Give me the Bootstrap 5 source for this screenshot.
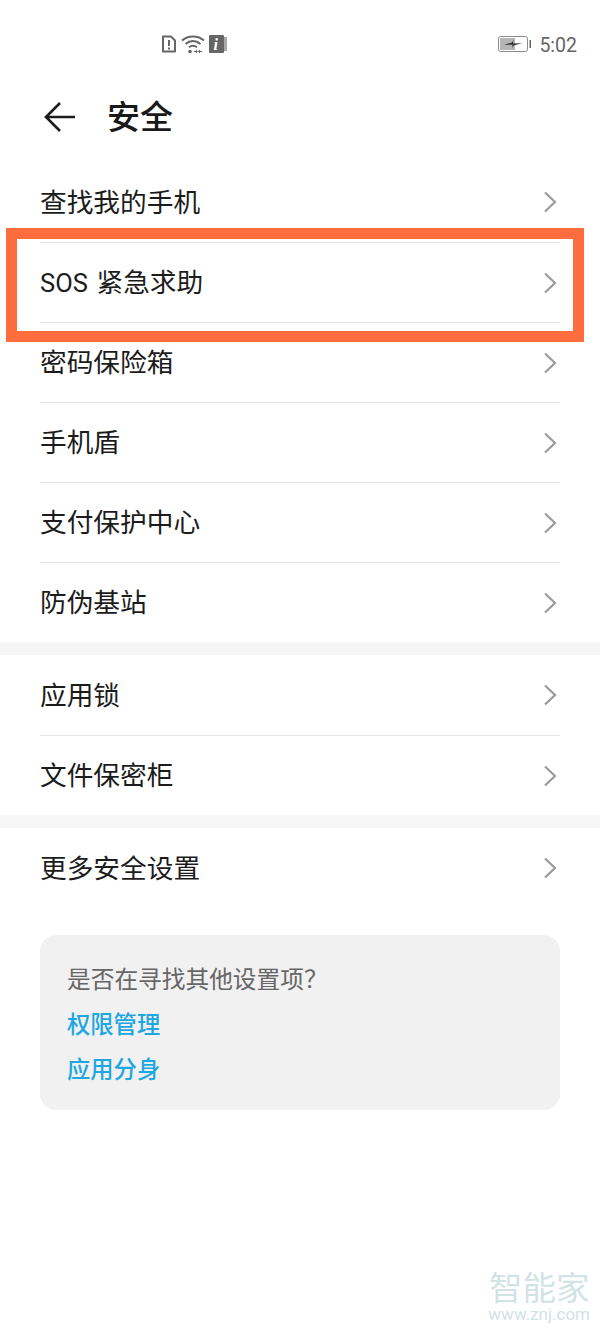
<!DOCTYPE html>
<html lang="zh-CN">
<head>
    <meta charset="UTF-8">
    <meta name="viewport" content="width=device-width, initial-scale=1.0">
    <title>安全</title>
    <link href="https://cdn.jsdelivr.net/npm/bootstrap@5.3.2/dist/css/bootstrap.min.css" rel="stylesheet">
    <style>
        body {
            font-family: Roboto, "Noto Sans CJK SC", sans-serif;
            background: #fff;
            color: #1c1c1c;
            height: 1333px;
            overflow: hidden;
            position: relative;
        }
        .status-bar {
            height: 88px;
            padding: 0 23px 0 161px;
            color: #666;
        }
        .status-time { font-size: 19.5px; line-height: 1; margin-left: 8px; padding-top: 3px; }
        .page-head {
            height: 74px;
            padding-left: 43px;
            padding-bottom: 16px;
        }
        .page-title { font-size: 33px; font-weight: 500; margin: 0 0 0 30px; line-height: 1; color: #191919; }
        .set-group { padding: 0 40px; }
        .set-row {
            height: 80px;
            font-size: 26.7px;
        }
        .set-row + .set-row { border-top: 1px solid #e3e3e3; }
        .set-row > span { padding-top: 2px; }
        .set-row svg { margin-right: 3px; }
        .latin-part { font-size: 25.5px; margin-right: 2px; }
        .group-gap { height: 13px; background: #f6f6f6; }
        .hint-card {
            margin: 27px 40px 0;
            height: 175px;
            background: #f1f1f1;
            border-radius: 16px;
            padding: 29px 27px 0;
            font-size: 23.7px;
            line-height: 32px;
        }
        .hint-title { color: #666; }
        .hint-link { color: #1ea7e1; font-weight: 500; display: block; text-decoration: none; font-size: 23.3px; }
        .hint-title + .hint-link { margin-top: 13px; }
        .hint-link + .hint-link { margin-top: 13px; }
        .mark-frame {
            position: absolute;
            left: 6px;
            top: 228px;
            width: 578px;
            height: 114px;
            border: 11px solid #ff6d3f;
            pointer-events: none;
        }
        .znj-mark {
            position: absolute;
            right: 10px;
            top: 1271px;
            color: #d2e3e6;
            text-align: center;
        }
        .znj-name { font-size: 33.5px; line-height: 36px; }
        .znj-url { font-size: 17px; line-height: 16px; margin-top: -1px; }
        .info-glyph { font-family: "Liberation Serif", serif; font-style: italic; font-weight: 700; font-size: 16px; fill: #fff; }
    </style>
</head>
<body>
<div class="status-bar d-flex align-items-center">
    <!-- sim alert, wifi, info -->
    <svg width="16" height="18" viewBox="0 0 16 18" class="me-1"><path d="M2 1.500h8l4 4v11H2z" fill="none" stroke="#666" stroke-width="2" stroke-linejoin="round"/><path d="M8 5v6M8 12.500v2" stroke="#666" stroke-width="2"/></svg>
    <svg width="24" height="20" viewBox="0 0 24 20"><path d="M1 6.500C7 1 17 1 23 6.500M4.500 10C9 6 15 6 19.500 10M8 13.300c2.500-2 5.500-2 8 0" fill="none" stroke="#666" stroke-width="2"/><circle cx="9" cy="17.500" r="1.800" fill="#666"/><path d="M13 17.500h3M15 16l1.500 1.500L15 19M21 17.500h-3M19 16l-1.500 1.500L19 19" fill="none" stroke="#666" stroke-width="1"/></svg>
    <svg width="19" height="18" viewBox="0 0 19 18" class="ms-1"><rect x="13" y="2" width="5" height="14" fill="#aaa"/><rect x="0" y="0" width="15" height="18" rx="1" fill="#666"/><text x="4.500" y="14.500" class="info-glyph">i</text></svg>
    <div class="ms-auto d-flex align-items-center">
        <svg width="33" height="16" viewBox="0 0 33 16"><rect x=".5" y=".5" width="29" height="15" rx="2" fill="#fff" stroke="#8a8a8a"/><rect x="2" y="2" width="15" height="12" fill="#b5b5b5"/><path d="M6 8.800l8-2.300 1.500-2.500-.5 3.500 9-.2-8.500 2.200L14 12l.5-3.200z" fill="#333"/><rect x="31.500" y="4" width="1.500" height="8" fill="#666"/></svg>
        <span class="status-time">5:02</span>
    </div>
</div>

<div class="page-head d-flex align-items-center">
    <svg width="34" height="32" viewBox="0 0 34 32"><path d="M32 16H3M17 2 3 16l14 14" fill="none" stroke="#1c1c1c" stroke-width="2.600"/></svg>
    <h1 class="page-title">安全</h1>
</div>

<div class="set-group">
    <div class="set-row d-flex align-items-center justify-content-between"><span>查找我的手机</span><svg width="14" height="22" viewBox="0 0 14 22"><path d="M2 1.500 12 11 2 20.500" fill="none" stroke="#9a9a9a" stroke-width="2.200"/></svg></div>
    <div class="set-row d-flex align-items-center justify-content-between"><span><span class="latin-part">SOS</span> 紧急求助</span><svg width="14" height="22" viewBox="0 0 14 22"><path d="M2 1.500 12 11 2 20.500" fill="none" stroke="#9a9a9a" stroke-width="2.200"/></svg></div>
    <div class="set-row d-flex align-items-center justify-content-between"><span>密码保险箱</span><svg width="14" height="22" viewBox="0 0 14 22"><path d="M2 1.500 12 11 2 20.500" fill="none" stroke="#9a9a9a" stroke-width="2.200"/></svg></div>
    <div class="set-row d-flex align-items-center justify-content-between"><span>手机盾</span><svg width="14" height="22" viewBox="0 0 14 22"><path d="M2 1.500 12 11 2 20.500" fill="none" stroke="#9a9a9a" stroke-width="2.200"/></svg></div>
    <div class="set-row d-flex align-items-center justify-content-between"><span>支付保护中心</span><svg width="14" height="22" viewBox="0 0 14 22"><path d="M2 1.500 12 11 2 20.500" fill="none" stroke="#9a9a9a" stroke-width="2.200"/></svg></div>
    <div class="set-row d-flex align-items-center justify-content-between"><span>防伪基站</span><svg width="14" height="22" viewBox="0 0 14 22"><path d="M2 1.500 12 11 2 20.500" fill="none" stroke="#9a9a9a" stroke-width="2.200"/></svg></div>
</div>
<div class="group-gap"></div>
<div class="set-group">
    <div class="set-row d-flex align-items-center justify-content-between"><span>应用锁</span><svg width="14" height="22" viewBox="0 0 14 22"><path d="M2 1.500 12 11 2 20.500" fill="none" stroke="#9a9a9a" stroke-width="2.200"/></svg></div>
    <div class="set-row d-flex align-items-center justify-content-between"><span>文件保密柜</span><svg width="14" height="22" viewBox="0 0 14 22"><path d="M2 1.500 12 11 2 20.500" fill="none" stroke="#9a9a9a" stroke-width="2.200"/></svg></div>
</div>
<div class="group-gap"></div>
<div class="set-group">
    <div class="set-row d-flex align-items-center justify-content-between"><span>更多安全设置</span><svg width="14" height="22" viewBox="0 0 14 22"><path d="M2 1.500 12 11 2 20.500" fill="none" stroke="#9a9a9a" stroke-width="2.200"/></svg></div>
</div>

<div class="hint-card">
    <div class="hint-title">是否在寻找其他设置项？</div>
    <a class="hint-link" href="#">权限管理</a>
    <a class="hint-link" href="#">应用分身</a>
</div>

<!-- annotation frame and watermark sit over the page -->
<div class="mark-frame"></div>
<div class="znj-mark">
    <div class="znj-name">智能家</div>
    <div class="znj-url">www.znj.com</div>
</div>

<script src="https://cdn.jsdelivr.net/npm/bootstrap@5.3.2/dist/js/bootstrap.bundle.min.js"></script>
</body>
</html>
